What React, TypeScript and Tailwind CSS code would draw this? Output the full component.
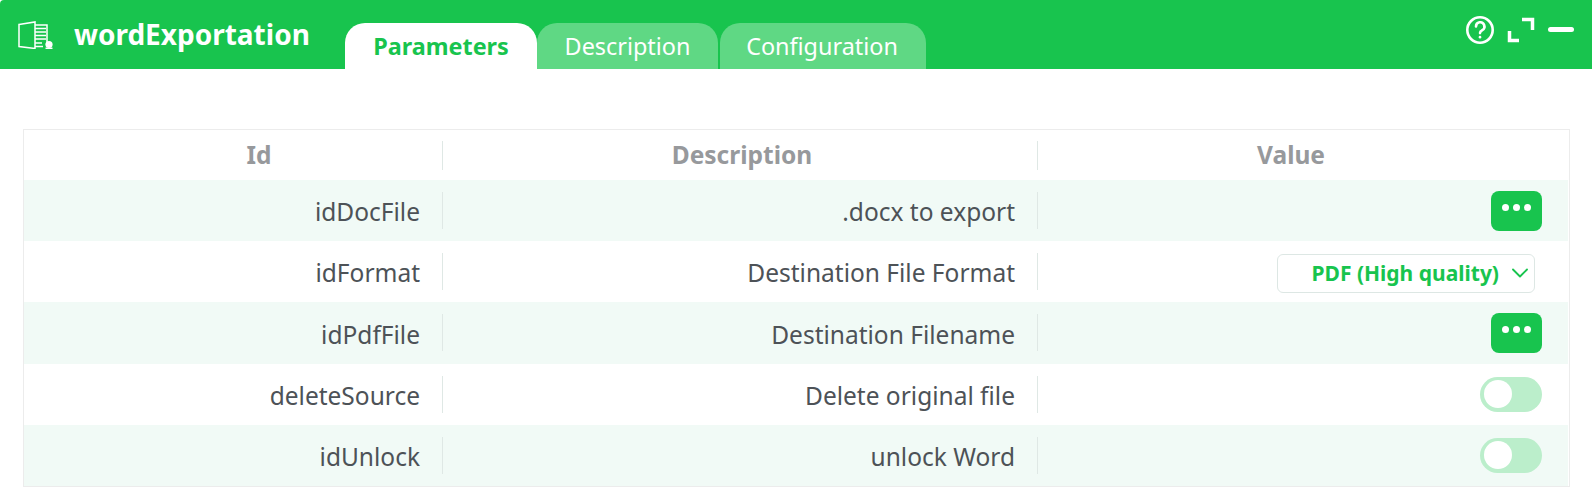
import { ChevronDown } from "lucide-react";

const rows = [
  { id: "idDocFile", description: ".docx to export", kind: "file" },
  { id: "idFormat", description: "Destination File Format", kind: "select" },
  { id: "idPdfFile", description: "Destination Filename", kind: "file" },
  { id: "deleteSource", description: "Delete original file", kind: "toggle" },
  { id: "idUnlock", description: "unlock Word", kind: "toggle" },
];

function ValueCell({ kind }: { kind: string }) {
  if (kind === "file") {
    return (
      <button className="flex h-10 w-[51px] items-start justify-center gap-[4px] rounded-lg bg-[#18c44e] pt-[13px]">
        <span className="h-[7px] w-[7px] rounded-full bg-white" />
        <span className="h-[7px] w-[7px] rounded-full bg-white" />
        <span className="h-[7px] w-[7px] rounded-full bg-white" />
      </button>
    );
  }
  if (kind === "select") {
    return (
      <div className="mr-[7px] mt-[3px] flex h-[39px] w-[258px] items-center justify-end rounded-md border border-[#dde7e4] bg-white text-[21px] font-bold text-[#18c44e]">
        <span>PDF (High quality)</span>
        <ChevronDown className="ml-[7px] h-[28px] w-[28px]" strokeWidth={1.6} />
      </div>
    );
  }
  return (
    <div className="flex h-[35px] w-[62px] items-center rounded-full bg-[#bbeecb] pl-1">
      <span className="h-7 w-7 rounded-full bg-white" />
    </div>
  );
}

export default function App() {
  return (
    <div className="h-[501px] w-[1592px] overflow-hidden bg-white font-['Noto_Sans',sans-serif]">
      {/* Header */}
      <div className="flex h-[69px] items-end rounded-tl-sm bg-[#18c44e] pl-[18px] text-white">
        <div className="mb-[16px] flex w-[327px] items-center self-end">
          <svg width="36" height="30" viewBox="0 0 36 30" fill="none" stroke="white" strokeWidth="1.5">
            <path d="M1 5.5 17 3v26.5L1 27.5z" />
            <path d="M17 6h12v18M17 9.5h11M17 13h11M17 16.5h11M17 20h11M17 24h7M17 27.5h8" />
            <circle cx="31" cy="25.5" r="3.6" fill="white" stroke="none" />
            <path d="M27.5 29.3h7" />
          </svg>
          <span className="ml-[20px] text-[28px] leading-[38px] font-bold">wordExportation</span>
        </div>
        <div className="flex h-[46px] items-stretch text-[23.4px]">
          <div className="flex w-[192px] items-center justify-center rounded-t-[20px] bg-white pt-[2px] font-bold text-[#18c44e]">Parameters</div>
          <div className="flex w-[181px] items-center justify-center rounded-t-[20px] bg-[#5fd884] pt-[2px]">Description</div>
          <div className="ml-[2px] flex w-[206px] items-center justify-center rounded-t-[20px] bg-[#5fd884] pr-[2px] pt-[2px]">Configuration</div>
        </div>
        <div className="mb-[24px] ml-auto mr-[18px] flex items-center self-end">
          <svg width="30" height="30" viewBox="0 0 30 30" fill="none" stroke="white" strokeWidth="2.6" strokeLinecap="round">
            <circle cx="15" cy="15" r="12.7" />
            <path d="M11 11.5a4.2 4.2 0 1 1 6.3 3.6c-1.400.8-2.300 1.500-2.300 3" />
            <path d="M15 22v.2" />
          </svg>
          <svg className="ml-[12px]" width="28" height="26" viewBox="0 0 28 26" fill="none" stroke="white" strokeWidth="3.500">
            <path d="M15 2.500h10.500V13" />
            <path d="M2.500 14v9.500H12" />
          </svg>
          <span className="mb-[1px] ml-[13px] h-[5px] w-[26px] rounded-full bg-white" />
        </div>
      </div>

      {/* Parameters table */}
      <div className="mx-[23px] mt-[60px] w-[1547px] border border-[#ececec] text-[24.5px] text-[#4d5257]">
        <div className="grid h-[50px] grid-cols-[419px_595px_1fr] items-center font-bold text-[#97999c]">
          <div className="flex h-[29px] items-center justify-center border-r border-[#dfe8e5] pl-[52px]">Id</div>
          <div className="flex h-[29px] items-center justify-center border-r border-[#dfe8e5] pl-[4px]">Description</div>
          <div className="flex h-[29px] items-center justify-center pr-[25px]">Value</div>
        </div>
        {rows.map((row, i) => (
          <div
            key={row.id}
            className={`mr-px grid h-[61.2px] grid-cols-[419px_595px_1fr] items-center ${i % 2 === 0 ? "bg-[#f1faf6]" : "bg-white"}`}
          >
            <div className="flex h-[37px] items-center justify-end border-r border-[#dfe8e5] pr-[22px] pt-[4px]">{row.id}</div>
            <div className="flex h-[37px] items-center justify-end border-r border-[#dfe8e5] pr-[22px] pt-[4px]">{row.description}</div>
            <div className="flex items-center justify-end pr-[26px]">
              <ValueCell kind={row.kind} />
            </div>
          </div>
        ))}
      </div>
    </div>
  );
}
